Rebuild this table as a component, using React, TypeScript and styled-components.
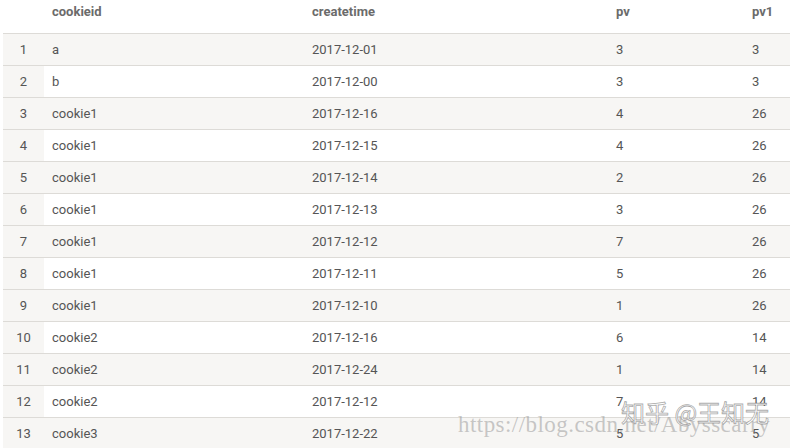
import React from "react";
import styled, { createGlobalStyle } from "styled-components";

const Global = createGlobalStyle`
  html, body { margin: 0; padding: 0; background: #fff; }
  body { width: 790px; height: 448px; overflow: hidden; font-family: Roboto, "Noto Sans", sans-serif; }
`;

const Page = styled.div`
  position: relative;
  width: 790px;
  height: 448px;
  overflow: hidden;
  background: #fff;
  padding-left: 3px;
  box-sizing: border-box;
`;

const Grid = styled.div`
  display: grid;
  grid-template-columns: 41px 260px 304px 136px 1fr;
`;

const HeadCell = styled.div`
  height: 34px;
  box-sizing: border-box;
  padding: 4px 0 0 8px;
  font-size: 13px;
  font-weight: 700;
  color: #6b6b6b;
  line-height: 16px;
  border-bottom: 1px solid #dddbd7;
`;

const Cell = styled.div<{ $shade: boolean; $index?: boolean }>`
  height: 32px;
  box-sizing: border-box;
  display: flex;
  align-items: center;
  justify-content: ${(p) => (p.$index ? "center" : "flex-start")};
  padding: 0 0 0 ${(p) => (p.$index ? "0" : "8px")};
  font-size: 13px;
  color: #555;
  background: ${(p) => (p.$shade || p.$index ? "#f7f6f4" : "#fff")};
  border-bottom: 1px solid #dddbd7;
`;

const Zhihu = styled.div`
  position: absolute;
  left: 621px;
  top: 396px;
  font-family: "Noto Sans CJK SC", sans-serif;
  font-size: 24px;
  line-height: 32px;
  color: #fff;
  -webkit-text-stroke: 0.8px rgba(110, 110, 110, 0.6);
  white-space: nowrap;
`;

const Csdn = styled.div`
  position: absolute;
  left: 458px;
  top: 411px;
  font-family: "Liberation Serif", serif;
  font-size: 23px;
  line-height: 28px;
  letter-spacing: 0.45px;
  color: rgba(155, 155, 155, 0.55);
  white-space: nowrap;
`;

const rows: [string, string, string, string][] = [
  ["a", "2017-12-01", "3", "3"],
  ["b", "2017-12-00", "3", "3"],
  ["cookie1", "2017-12-16", "4", "26"],
  ["cookie1", "2017-12-15", "4", "26"],
  ["cookie1", "2017-12-14", "2", "26"],
  ["cookie1", "2017-12-13", "3", "26"],
  ["cookie1", "2017-12-12", "7", "26"],
  ["cookie1", "2017-12-11", "5", "26"],
  ["cookie1", "2017-12-10", "1", "26"],
  ["cookie2", "2017-12-16", "6", "14"],
  ["cookie2", "2017-12-24", "1", "14"],
  ["cookie2", "2017-12-12", "7", "14"],
  ["cookie3", "2017-12-22", "5", "5"],
];

export default function App() {
  return (
    <Page>
      <Global />
      <Grid>
        <HeadCell />
        <HeadCell>cookieid</HeadCell>
        <HeadCell>createtime</HeadCell>
        <HeadCell>pv</HeadCell>
        <HeadCell>pv1</HeadCell>
        {rows.map((r, i) => {
          const shade = i % 2 === 0;
          return (
            <React.Fragment key={i}>
              <Cell $shade={shade} $index>{i + 1}</Cell>
              {r.map((v, j) => (
                <Cell key={j} $shade={shade}>{v}</Cell>
              ))}
            </React.Fragment>
          );
        })}
      </Grid>
      <Csdn>https://blog.csdn.net/Abysscarry</Csdn>
      <Zhihu>知乎 @王知无</Zhihu>
    </Page>
  );
}
